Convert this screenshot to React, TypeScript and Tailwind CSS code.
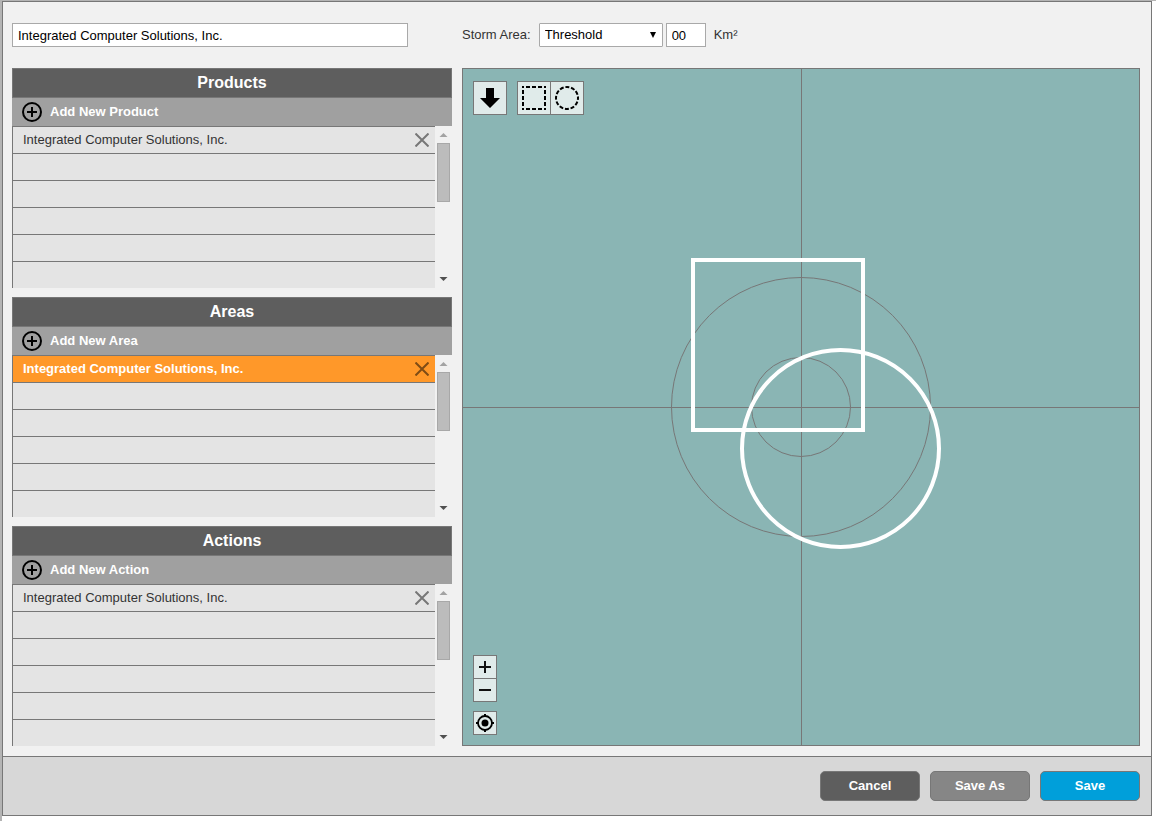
import React from "react";

type ListPanelProps = {
  title: string;
  noun: string;
  selected?: boolean;
};

const ITEM = "Integrated Computer Solutions, Inc.";

const PlusCircle = () => (
  <svg viewBox="0 0 20 20" className="size-5" fill="none" stroke="#000" strokeWidth="2" aria-hidden="true">
    <circle cx="10" cy="10" r="9" />
    <path d="M10 5v10M5 10h10" />
  </svg>
);

const ListPanel = ({ title, noun, selected = false }: ListPanelProps) => {
  return (
    <section className="flex flex-col">
      <h2 className="h-[30px] border border-[#777] bg-[#5e5e5e] text-center text-base leading-[27px] font-bold text-white">
        {title}
      </h2>
      <button className="flex h-7 items-center gap-2 bg-[#a0a0a0] pl-[10px] text-left font-bold text-white">
        <PlusCircle />
        Add New {noun}
      </button>
      <div className="flex h-[162px] overflow-hidden">
        <ul className="grow border-l border-[#777]">
          <li
            className={
              selected
                ? "flex h-[27px] items-center justify-between border-t border-[#777] bg-[#ff9829] pr-[6px] pl-[10px] font-bold text-white"
                : "flex h-[27px] items-center justify-between border-t border-[#777] bg-[#e4e4e4] pr-[6px] pl-[10px]"
            }
          >
            {ITEM}
            <button aria-label={`Remove ${ITEM}`}>
              <svg
                viewBox="0 0 14 14"
                className={selected ? "size-[14px] text-[#7f4c15]" : "size-[14px] text-[#777]"}
                stroke="currentColor"
                strokeWidth="2"
              >
                <path d="M0.5 0.5l13 13M13.5 0.5l-13 13" />
              </svg>
            </button>
          </li>
          {[1, 2, 3, 4, 5].map((row) => (
            <li key={row} className="h-[27px] border-t border-[#777] bg-[#e4e4e4]" />
          ))}
        </ul>
        <div className="flex w-[17px] flex-col items-center bg-[#f1f1f1]">
          <svg viewBox="0 0 17 17" className="size-[17px]" fill="#a3a3a3">
            <path d="M4.5 11h8L8.5 7z" />
          </svg>
          <div className="h-[59px] w-[13px] border border-[#a8a8a8] bg-[#bcbcbc]" />
          <svg viewBox="0 0 17 17" className="mt-auto size-[17px]" fill="#505050">
            <path d="M4.5 6h8L8.5 10z" />
          </svg>
        </div>
      </div>
    </section>
  );
};

const MapView = () => {
  return (
    <div className="relative flex grow flex-col justify-between overflow-hidden border border-[#777] bg-[#8ab5b4] p-[10px]">
      <svg className="absolute inset-0 size-full" viewBox="0 0 676 676" fill="none">
        <g stroke="#777" strokeWidth="1">
          <path d="M338.5 -200v1100M-400 338.5h1500" />
          <circle cx="338" cy="338" r="129.5" />
          <circle cx="338" cy="338" r="49.5" />
        </g>
        <g stroke="#fff" strokeWidth="4">
          <rect x="230" y="191" width="170" height="170" />
          <circle cx="377.5" cy="379.5" r="98.5" />
        </g>
      </svg>

      <div className="relative flex gap-[10px] pt-[2px]">
        <button aria-label="Drop" className="flex size-[34px] items-center justify-center border border-[#777] bg-[#e0ebea]">
          <svg viewBox="0 0 20 20" className="size-5">
            <path d="M6 0h8v10h6L10 20 0 10h6z" />
          </svg>
        </button>
        <div className="flex border border-[#777] bg-[#e0ebea]">
          <button aria-label="Draw rectangle" className="flex h-8 w-[33px] items-center justify-center border-r border-[#777]">
            <svg viewBox="0 0 24 24" className="size-6" fill="none" stroke="#000" strokeWidth="2">
              <path strokeDasharray="4 2" strokeDashoffset="2" d="M0 1h24M0 23h24M1 0v24M23 0v24" />
            </svg>
          </button>
          <button aria-label="Draw circle" className="flex size-8 items-center justify-center">
            <svg viewBox="0 0 24 24" className="size-6" fill="none" stroke="#000" strokeWidth="2">
              <circle cx="12" cy="12" r="11" strokeDasharray="4 1.76" strokeDashoffset="2" />
            </svg>
          </button>
        </div>
      </div>

      <div className="relative flex w-6 flex-col gap-[9px]">
        <div className="border border-[#777] bg-[#e0ebea]">
          <button aria-label="Zoom in" className="flex h-[23px] w-full items-center justify-center border-b border-[#777]">
            <svg viewBox="0 0 12 12" className="size-3" stroke="#111" strokeWidth="2">
              <path d="M6 0v12M0 6h12" />
            </svg>
          </button>
          <button aria-label="Zoom out" className="flex h-[22px] w-full items-center justify-center">
            <svg viewBox="0 0 12 12" className="size-3" stroke="#111" strokeWidth="2">
              <path d="M0 6h12" />
            </svg>
          </button>
        </div>
        <button aria-label="Center map" className="flex size-6 items-center justify-center border border-[#777] bg-[#e0ebea]">
          <svg viewBox="0 0 18 18" className="size-[18px]" fill="none" stroke="#000" strokeWidth="1.8">
            <circle cx="9" cy="9" r="7" />
            <circle cx="9" cy="9" r="3.5" fill="#000" stroke="none" />
            <path strokeWidth="2" d="M9 0v3M9 15v3M0 9h3M15 9h3" />
          </svg>
        </button>
      </div>
    </div>
  );
};

const App = () => {
  return (
    <div className="flex min-h-screen flex-col border-t border-l-2 border-t-[#b4b4b4] border-l-[#b4b4b4] bg-white pr-1 pb-[5px] font-['Liberation_Sans',Arial,sans-serif] text-[13px] leading-4 text-[#333]">
      <div className="flex grow flex-col border border-[#777] bg-[#f1f1f1]">
        <main className="flex grow flex-col gap-[21px] px-[9px] pt-[21px] pb-[10px]">
          <form className="flex h-6 items-center gap-[54px]">
            <input
              aria-label="Name"
              defaultValue={ITEM}
              className="h-6 w-[396px] border border-[#a9a9a9] bg-white px-[5px] text-black"
            />
            <div className="flex items-center">
              <label htmlFor="storm">Storm Area:</label>
              <div className="relative ml-2">
                <select
                  id="storm"
                  className="block h-6 w-[124px] appearance-none rounded-[1px] border border-[#a9a9a9] bg-white px-[5px] text-black"
                >
                  <option>Threshold</option>
                </select>
                <svg viewBox="0 0 6 6" className="pointer-events-none absolute top-[9px] right-[7px] size-[6px]">
                  <path d="M0 0h6L3 6z" />
                </svg>
              </div>
              <input
                id="km"
                defaultValue="00"
                className="ml-[3px] h-6 w-10 border border-[#a9a9a9] bg-white px-[5px] text-black"
              />
              <label htmlFor="km" className="ml-2">
                Km²
              </label>
            </div>
          </form>

          <div className="flex grow gap-[10px] pr-[2px]">
            <div className="flex w-[440px] shrink-0 flex-col justify-between">
              <ListPanel title="Products" noun="Product" />
              <ListPanel title="Areas" noun="Area" selected />
              <ListPanel title="Actions" noun="Action" />
            </div>
            <MapView />
          </div>
        </main>

        <footer className="flex items-center justify-end gap-[10px] border-t border-[#777] bg-[#d7d7d7] py-[14px] pr-[11px] font-bold text-white">
          <button className="h-[30px] w-[100px] rounded-[5px] border border-[#777] bg-[#5e5e5e]">Cancel</button>
          <button className="h-[30px] w-[100px] rounded-[5px] border border-[#777] bg-[#868686]">Save As</button>
          <button className="h-[30px] w-[100px] rounded-[5px] border border-[#777] bg-[#009fda]">Save</button>
        </footer>
      </div>
    </div>
  );
};

export default App;
